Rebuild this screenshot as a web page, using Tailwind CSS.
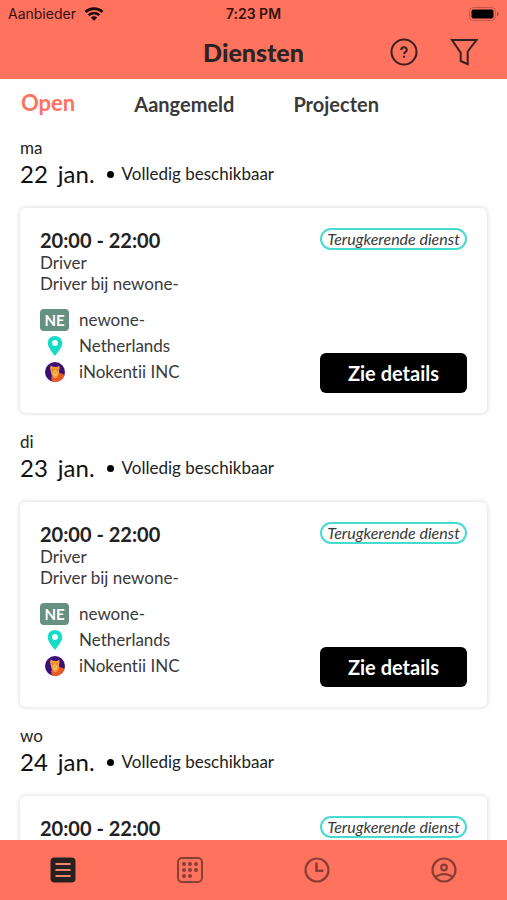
<!DOCTYPE html>
<html lang="nl">
<head>
<meta charset="utf-8">
<meta name="viewport" content="width=device-width, initial-scale=1">
<title>Diensten</title>
<script src="https://cdn.jsdelivr.net/npm/@tailwindcss/browser@4"></script>
</head>
<body class="bg-white font-['Lato',sans-serif] text-[#3a3a3a] [font-variant-ligatures:none]">
<svg class="hidden" aria-hidden="true">
  <symbol id="pin" viewBox="0 0 16 20"><path fill="#15dcc8" fill-rule="evenodd" d="M8 0C3.800 0 .8 3 .8 7c0 4.600 4.200 9 7.200 13 3-4 7.200-8.400 7.200-13 0-4-3-7-7.200-7Zm0 4.100a2.900 2.900 0 1 1 0 5.800 2.900 2.900 0 0 1 0-5.800Z"/></symbol>
  <symbol id="avatar" viewBox="0 0 20 20">
    <circle cx="10" cy="10" r="10" fill="#3b0f78"/>
    <path fill="#ea5a26" d="M6 15 12.500 11l4.500.5 2.600 1.700A10 10 0 0 1 7 19.500Z"/>
    <path fill="#f29a37" d="M5.800 3.500 8 4.800l4 .2 2.200-1.200.5 2.500-.7 2.200.4 3-2.600 4.200-2.600.5-2.500-3-.9-3.700L5 6Z"/>
    <path fill="#f9bd58" d="m8 10 1.500-1.500L12 10l.5 2.500-2 1.800L8.300 13Z"/>
    <path fill="#8a3a32" d="M7.400 7.500h1v.8h-1ZM11.600 7.500h1v.8h-1ZM9.300 10.500h1.600l-.8 1.100Z"/>
  </symbol>
</svg>
<div class="flex h-screen flex-col overflow-hidden">
  <header class="shrink-0 bg-[#ff725e] text-[#2b2423]">
    <div class="grid h-7 grid-cols-3 items-center px-2 font-['Inter',sans-serif] text-sm text-[#35100c]">
      <div class="flex items-center gap-2">
        <span>Aanbieder</span>
        <svg class="h-[14px] w-5" viewBox="0 0 20 14" fill="none" stroke="#1c0805" stroke-width="2.600"><path d="M1.500 5c4.700-4.500 12.300-4.500 17 0M4.600 8.200c3-2.900 7.800-2.900 10.800 0"/><path fill="#1c0805" stroke="none" d="M6.800 10.500c1.800-1.700 4.600-1.700 6.400 0L10 13.800Z"/></svg>
      </div>
      <span class="text-center font-semibold">7:23 PM</span>
      <svg class="h-[14px] w-[30px] justify-self-end" viewBox="0 0 30 14"><rect x=".5" y=".5" width="26" height="13" rx="4" fill="none" stroke="#c65849"/><rect x="2.500" y="2.500" width="22" height="9" rx="2" fill="#000"/><path fill="#a94c3f" d="M28 4.500c2.300.8 2.300 4.200 0 5Z"/></svg>
    </div>
    <div class="grid h-[51px] grid-cols-[1fr_auto_1fr] items-center pb-1">
      <h1 class="col-start-2 text-[25px] leading-8 font-black">Diensten</h1>
      <div class="flex items-center justify-end gap-8 pr-[29px]">
        <button type="button" aria-label="Help" class="block"><svg class="size-7" viewBox="0 0 28 28" fill="none" stroke="#35211f" stroke-width="2"><circle cx="14" cy="14" r="12.500"/><path d="M11.300 12c0-3.500 5.600-3.500 5.600-.2 0 2.200-2.800 2-2.800 4.400M14.100 17.700v2"/></svg></button>
        <button type="button" aria-label="Filter" class="block"><svg class="size-7" viewBox="0 0 28 28" fill="none" stroke="#35211f" stroke-width="2"><path d="M2 2h24.500L17.700 13.500v12.700l-7-3.200v-8.300Z"/></svg></button>
      </div>
    </div>
  </header>
  <nav aria-label="Lijsten" class="flex h-[49px] shrink-0 items-center gap-[59px] px-[21px] text-xl font-bold">
    <a href="#open" aria-current="page" class="text-[22px] text-[#ff725e]">Open</a>
    <a href="#aangemeld">Aangemeld</a>
    <a href="#projecten">Projecten</a>
  </nav>
  <main id="days" class="min-h-0 flex-1 overflow-y-auto px-5 pt-[10px] text-[17px] [scrollbar-width:none]"></main>
  <nav aria-label="Hoofdmenu" class="grid h-[60px] shrink-0 grid-cols-4 bg-[#ff725e]">
    <a href="#diensten" aria-label="Diensten" aria-current="page" class="flex items-center justify-center"><svg class="size-[26px]" viewBox="0 0 26 26"><rect x=".5" y=".5" width="25" height="25" rx="4" fill="#26201f"/><path d="M5.500 7h15M5.500 13h15M5.500 19h15" stroke="#ff8270" stroke-width="2.200"/></svg></a>
    <a href="#kalender" aria-label="Kalender" class="flex items-center justify-center"><svg class="size-[26px]" viewBox="0 0 26 26" fill="#8a3f35"><rect x="1" y="1" width="24" height="24" rx="4" fill="none" stroke="#8a3f35" stroke-width="2"/><circle cx="7" cy="7" r="2"/><circle cx="13" cy="7" r="2"/><circle cx="19" cy="7" r="2"/><circle cx="7" cy="13" r="2"/><circle cx="13" cy="13" r="2"/><circle cx="19" cy="13" r="2"/><circle cx="7" cy="19" r="2"/><circle cx="13" cy="19" r="2"/></svg></a>
    <a href="#uren" aria-label="Uren" class="flex items-center justify-center"><svg class="size-[26px]" viewBox="0 0 26 26" fill="none" stroke="#8a3f35" stroke-width="2.200"><circle cx="13" cy="13" r="11.500"/><path stroke-width="2.600" d="M12.500 5.500v8.300h7"/></svg></a>
    <a href="#profiel" aria-label="Profiel" class="flex items-center justify-center"><svg class="size-[26px]" viewBox="0 0 26 26" fill="none" stroke="#8a3f35" stroke-width="2.200"><circle cx="13" cy="13" r="11.500"/><circle cx="13" cy="10.500" r="2.800"/><path d="M4.500 20.500c4-4.500 13-4.500 17 0"/></svg></a>
  </nav>
</div>
<template id="day">
  <section class="mb-[19px]">
    <h2>
      <span data-day class="block leading-5 text-[#222]"></span>
      <span class="flex h-8 items-center text-[#222]">
        <span data-date class="mr-3 flex gap-[10px] text-2xl text-[#111]"></span>
        <span class="mr-2 size-[7px] rounded-full bg-black"></span>
        <span>Volledig beschikbaar</span>
      </span>
    </h2>
    <article class="mt-[18px] flex justify-between rounded-md bg-white p-5 shadow-[0_0_4px_1px_rgba(0,0,0,0.12)]">
      <div class="pb-2">
        <h3 class="text-xl leading-6 font-bold text-[#222]">20:00 - 22:00</h3>
        <p class="leading-[21px]">Driver</p>
        <p class="leading-[21px]">Driver bij newone-</p>
        <ul class="mt-[13px] leading-[26px]">
          <li class="flex items-center gap-[10px]"><span class="flex h-[22px] w-[29px] items-center justify-center rounded bg-[#66907f] text-[15px] font-bold text-white">NE</span>newone-</li>
          <li class="flex items-center gap-[10px]"><span class="flex w-[29px] justify-center"><svg class="h-5 w-4"><use href="#pin"/></svg></span>Netherlands</li>
          <li class="flex items-center gap-[10px]"><span class="flex w-[29px] justify-center"><svg class="size-5"><use href="#avatar"/></svg></span>iNokentii INC</li>
        </ul>
      </div>
      <div class="flex w-[147px] flex-col justify-between">
        <span class="flex h-[22px] items-center justify-center rounded-full border-2 border-[#45dccf] text-base leading-4 whitespace-nowrap italic">Terugkerende dienst</span>
        <button type="button" class="h-10 rounded-md bg-black text-xl font-bold text-white">Zie details</button>
      </div>
    </article>
  </section>
</template>
<script>
  const days = [['ma', '22'], ['di', '23'], ['wo', '24']];
  const template = document.getElementById('day');
  for (const [day, date] of days) {
    const node = template.content.cloneNode(true);
    node.querySelector('[data-day]').textContent = day;
    for (const part of [date, 'jan.']) {
      const span = document.createElement('span');
      span.textContent = part;
      node.querySelector('[data-date]').append(span);
    }
    document.getElementById('days').append(node);
  }
</script>
</body>
</html>
